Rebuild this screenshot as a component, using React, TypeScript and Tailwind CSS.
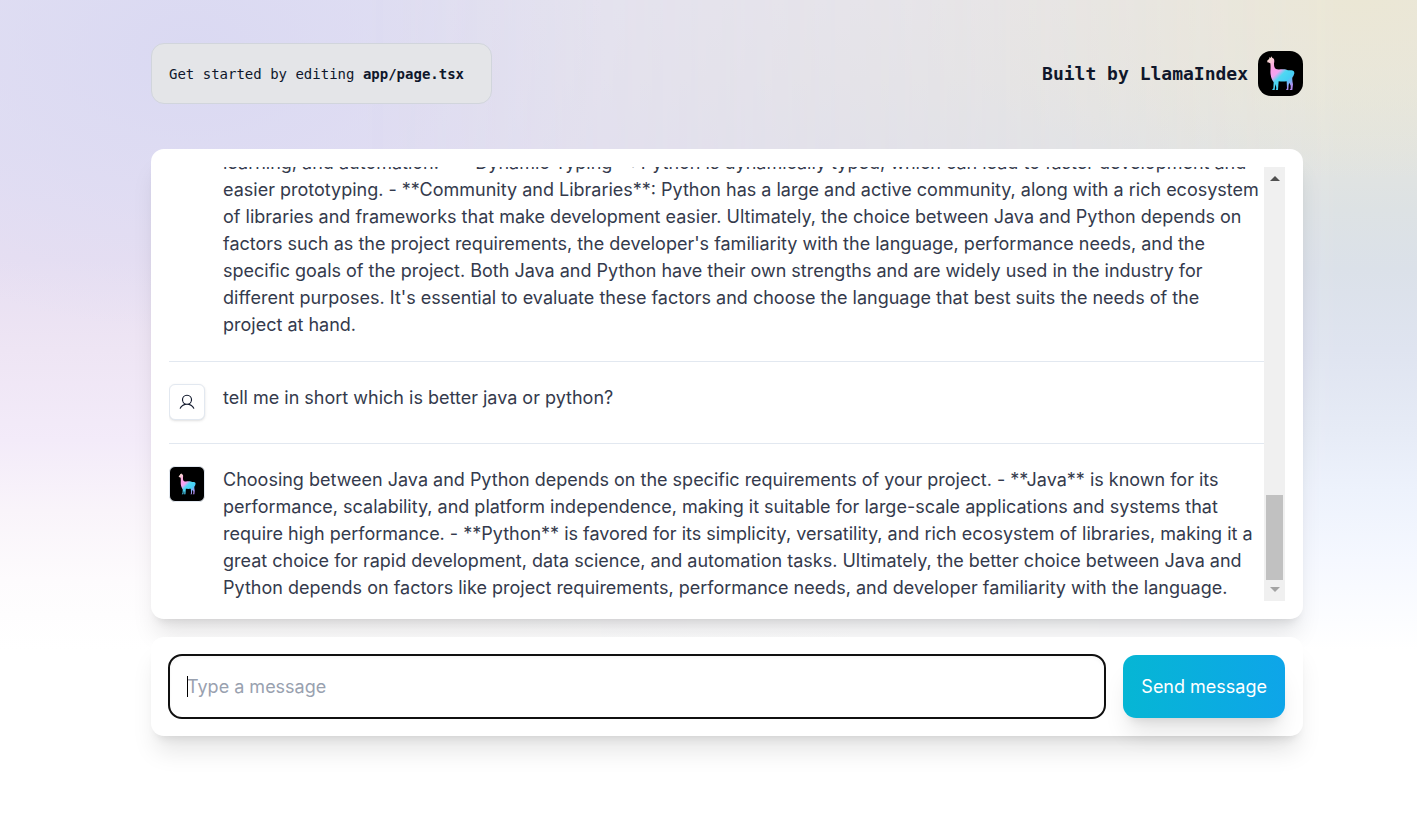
import { useId } from "react";

function Llama({ className }: { className: string }) {
  const id = useId();
  return (
    <svg viewBox="0 0 135 135" className={className} role="img" aria-label="Llama Logo">
      <defs>
        <linearGradient id={id} gradientUnits="userSpaceOnUse" x1="28" y1="22" x2="108" y2="104">
          <stop offset="0.04" stopColor="#f6dcd0" />
          <stop offset="0.2" stopColor="#fbb0dc" />
          <stop offset="0.3" stopColor="#fb9fe8" />
          <stop offset="0.45" stopColor="#f3a4f0" />
          <stop offset="0.58" stopColor="#4fd8f2" />
          <stop offset="0.76" stopColor="#45cff5" />
          <stop offset="0.96" stopColor="#b48bf0" />
        </linearGradient>
      </defs>
      <rect width="135" height="135" fill="#000" />
      <path
        fill={`url(#${id})`}
        d="M33 25 L35 18 L38 21 L41 16 L43 21 C49 22 50 28 48 37 C48 46 49 50 54 54 C61 57 76 53 86 56 C91 59 95 57 100 58 C107 58 111 64 108 70 C107 75 105 77 103 80 C102 87 104 94 105 100 L103 117 L94 117 L98 113 L98 104 L94 95 L92 102 L91 117 L84 117 L87 112 L86 91 C79 92 69 92 62 91 L61 103 L60 117 L53 117 L55 112 L53 99 L51 108 L50 117 L42 117 L46 112 L47 94 C43 88 39 80 38 71 C36 62 39 51 37 37 C34 36 29 36 28 33 C27 28 30 26 33 25 Z"
      />
    </svg>
  );
}

function UserAvatar() {
  return (
    <div className="flex size-9 shrink-0 items-center justify-center rounded-md border border-slate-200 bg-white shadow-sm">
      <svg viewBox="0 0 256 256" className="size-[18px] fill-slate-900" aria-hidden="true">
        <path d="M230.92 212c-15.23-26.33-38.7-45.21-66.09-54.16a72 72 0 1 0-73.66 0c-27.39 8.94-50.86 27.82-66.09 54.16a8 8 0 1 0 13.85 8c18.84-32.56 52.14-52 89.07-52s70.23 19.44 89.07 52a8 8 0 1 0 13.85-8ZM72 96a56 56 0 1 1 56 56 56.06 56.06 0 0 1-56-56Z" />
      </svg>
    </div>
  );
}

function BotAvatar() {
  return (
    <div className="size-9 shrink-0 overflow-hidden rounded-md border border-slate-200 bg-black p-[3px]">
      <Llama className="size-full" />
    </div>
  );
}

type Message = { role: "user" | "assistant"; content: string };

const messages: Message[] = [
  {
    role: "assistant",
    content:
      "**Python**: - **Ease of Use**: Python is known for its simple and readable syntax. - **Versatility**: Python is used for web development, data analysis, machine\nlearning, and automation. - **Dynamic Typing**: Python is dynamically typed, which can lead to faster development and easier prototyping. - **Community and Libraries**: Python has a large and active community, along with a rich ecosystem of libraries and frameworks that make development easier. Ultimately, the choice between Java and Python depends on factors such as the project requirements, the developer's familiarity with the language, performance needs, and the specific goals of the project. Both Java and Python have their own strengths and are widely used in the industry for different purposes. It's essential to evaluate these factors and choose the language that best suits the needs of the project at hand.",
  },
  { role: "user", content: "tell me in short which is better java or python?" },
  {
    role: "assistant",
    content:
      "Choosing between Java and Python depends on the specific requirements of your project. - **Java** is known for its performance, scalability, and platform independence, making it suitable for large-scale applications and systems that require high performance. - **Python** is favored for its simplicity, versatility, and rich ecosystem of libraries, making it a great choice for rapid development, data science, and automation tasks. Ultimately, the better choice between Java and Python depends on factors like project requirements, performance needs, and developer familiarity with the language.",
  },
];

function ScrollBar() {
  return (
    <div className="flex w-[21px] shrink-0 flex-col items-center justify-between bg-[#f0f0f0] px-0.5" aria-hidden="true">
      <div className="flex h-[21px] items-center pt-0.5">
        <svg viewBox="0 0 10 5" className="h-[5px] w-2.5 fill-[#505050]">
          <path d="M5 0 10 5H0Z" />
        </svg>
      </div>
      <div className="flex w-full flex-col items-center">
        <div className="h-[85px] w-full bg-[#c1c1c1]" />
        <div className="flex h-[21px] items-center pb-0.5">
          <svg viewBox="0 0 10 5" className="h-[5px] w-2.5 fill-[#a3a3a3]">
            <path d="M0 0H10L5 5Z" />
          </svg>
        </div>
      </div>
    </div>
  );
}

function Backdrop() {
  return (
    <div className="absolute inset-0 -z-10" aria-hidden="true">
      <div className="absolute inset-0 bg-[radial-gradient(ellipse_420px_280px_at_190px_50px,#dad9f2_0%,#dad9f200_100%),linear-gradient(to_bottom,#e3e1f3_0,#e3dff3_150px,#e7dff2_260px,#eee5f4_350px,#f3ebf9_440px,#f9f4fa_510px,#fdfbfd_580px,#ffffff_650px)]" />
      <div className="absolute inset-0 bg-[radial-gradient(ellipse_460px_180px_at_96%_0,#ebe7d5_0%,#ebe7d580_45%,#ebe7d500_100%),linear-gradient(to_bottom,#e9e7e1_0,#e6e6de_80px,#e2e4e0_150px,#dde2e4_210px,#dbe1e9_270px,#dfe4f0_350px,#e6ebf6_430px,#edf2fc_490px,#f5f8ff_560px,#ffffff_650px)] [mask-image:linear-gradient(to_right,transparent_25%,black_95%)]" />
    </div>
  );
}

export default function App() {
  return (
    <main className="relative isolate min-h-screen pt-[43px] pr-10 pb-[87px] pl-[77px] font-['Inter',sans-serif] text-slate-900">
      <Backdrop />
      <div className="mx-auto flex max-w-[1152px] flex-col">
        <header className="flex items-center justify-between font-['DejaVu_Sans_Mono',monospace]">
          <p className="flex h-[61px] w-[341px] items-center rounded-[13px] border border-gray-300 bg-[#e4e5e8] px-[17px] text-sm">
            <span>
              Get started by editing&nbsp;
              <code className="font-['DejaVu_Sans_Mono',monospace] font-bold">app/page.tsx</code>
            </span>
          </p>
          <a href="https://www.llamaindex.ai/" className="flex items-center gap-2.5 text-lg font-bold">
            <span>Built by LlamaIndex</span>
            <Llama className="size-[45px] rounded-[13px]" />
          </a>
        </header>

        <section className="mt-[45px] rounded-[13px] bg-white p-[18px] shadow-xl" aria-label="Conversation">
          <div className="flex h-[434px]">
            <div className="flex min-w-0 flex-1 flex-col justify-end divide-y divide-slate-200 overflow-hidden">
              {messages.map((message, index) => (
                <div key={index} className="flex shrink-0 items-start gap-[18px] pt-[22px] pb-[23px] last:pb-0">
                  {message.role === "user" ? <UserAvatar /> : <BotAvatar />}
                  <p className="min-w-0 flex-1 pr-1 text-lg leading-[27px] whitespace-pre-line text-[#343a4c]">
                    {message.content}
                  </p>
                </div>
              ))}
            </div>
            <ScrollBar />
          </div>
        </section>

        <form
          onSubmit={(event) => event.preventDefault()}
          className="mt-[18px] flex gap-[18px] rounded-[13px] bg-white p-[18px] shadow-xl"
        >
          <div className="relative flex min-w-0 flex-1">
            <input
              type="text"
              name="message"
              aria-label="Message"
              placeholder="Type a message"
              className="h-[63px] w-full rounded-[13px] bg-white px-[18px] text-lg caret-transparent shadow-inner outline-2 -outline-offset-1 outline-[#101010] placeholder:text-gray-400"
            />
            <span className="absolute top-[21px] left-[18px] h-[21px] w-px bg-black" aria-hidden="true" />
          </div>
          <button
            type="submit"
            className="h-[63px] rounded-[13px] bg-[linear-gradient(to_right,#06b6d4,#0ea5e9)] px-[18px] text-lg text-white shadow-xl"
          >
            Send message
          </button>
        </form>
      </div>
    </main>
  );
}
